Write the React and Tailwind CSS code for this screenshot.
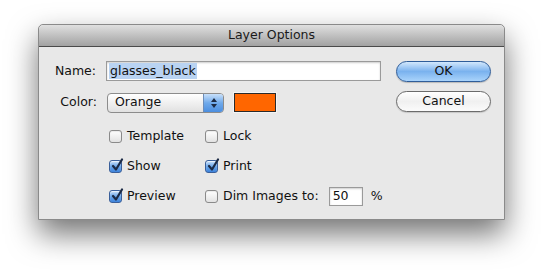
import React from "react";

const font = { fontFamily: '"DejaVu Sans", "Lucida Grande", sans-serif' };

function Checkbox({ checked, label }) {
  return (
    <div className="flex items-center gap-[5px] h-[14px]">
      {checked ? (
        <div className="relative w-[13px] h-[13px] rounded-[3px] border border-[#3a5f9a] bg-gradient-to-b from-[#c9e1fa] via-[#6aa6ea] to-[#3d83db] shadow-[inset_0_1px_1px_rgba(255,255,255,0.7)]">
          <svg className="absolute -top-[3px] left-[1px]" width="13" height="14" viewBox="0 0 13 14">
            <path d="M2 8 L5 11.5 L11 1.5" fill="none" stroke="#1b2a45" strokeWidth="2.2" strokeLinecap="round" strokeLinejoin="round" />
          </svg>
        </div>
      ) : (
        <div className="w-[13px] h-[13px] rounded-[3px] border border-[#8a8a8a] bg-gradient-to-b from-[#ffffff] to-[#e2e2e2] shadow-[inset_0_1px_1px_rgba(0,0,0,0.08)]" />
      )}
      <span className="text-[12.5px] text-[#111] leading-none">{label}</span>
    </div>
  );
}

export default function App() {
  return (
    <div className="w-[546px] h-[274px] bg-white overflow-hidden" style={font}>
      <div className="ml-[38px] pt-[24px]">
        <div className="w-[467px] rounded-t-[5px] border border-[#8a8a8a] bg-[#e8e8e8] shadow-[0_14px_30px_rgba(0,0,0,0.55)]">
          {/* title bar */}
          <div className="h-[22px] rounded-t-[5px] bg-gradient-to-b from-[#e0e0e0] to-[#a2a2a2] border-b border-[#4a4a4a] flex items-center justify-center">
            <span className="text-[12.5px] text-[#1a1a1a]">Layer Options</span>
          </div>

          {/* body */}
          <div className="flex pt-[14px] pb-[16px] pr-[13px]">
            <div className="flex-1">
              <div className="flex items-center">
                <div className="w-[57px] text-right text-[12.5px] text-[#111]">Name:</div>
                <div className="ml-[10px] w-[275px] h-[20px] bg-white border border-[#9a9a9a] shadow-[inset_0_1px_2px_rgba(0,0,0,0.2)] flex items-center pl-[2px]">
                  <span className="bg-[#b9d3f2] text-[12.5px] text-[#111] leading-[16px] px-[1px]">glasses_black</span>
                </div>
              </div>

              <div className="flex items-center mt-[11px]">
                <div className="w-[58px] text-right text-[12.5px] text-[#111]">Color:</div>
                <div className="ml-[10px] w-[117px] h-[20px] rounded-[4px] border border-[#8c8c8c] bg-gradient-to-b from-[#ffffff] to-[#e1e1e1] flex items-center overflow-hidden">
                  <span className="flex-1 pl-[7px] text-[12.5px] text-[#111]">Orange</span>
                  <div className="w-[20px] h-full border-l border-[#6d8db8] bg-gradient-to-b from-[#c8e0fa] via-[#6fa9ea] to-[#4b8ee0] flex flex-col items-center justify-center gap-[2px]">
                    <svg width="6" height="4" viewBox="0 0 6 4"><path d="M3 0 L6 4 L0 4 Z" fill="#1d2b44" /></svg>
                    <svg width="6" height="4" viewBox="0 0 6 4"><path d="M0 0 L6 0 L3 4 Z" fill="#1d2b44" /></svg>
                  </div>
                </div>
                <div className="ml-[9px] p-[1px] bg-[#f4f4f4]">
                  <div className="w-[42px] h-[19px] bg-[#ff6600] border border-[#2a2a2a]" />
                </div>
              </div>

              <div className="ml-[70px] mt-[16px] grid grid-cols-[96px_auto] gap-y-[16px]">
                <Checkbox label="Template" />
                <Checkbox label="Lock" />
                <Checkbox checked label="Show" />
                <Checkbox checked label="Print" />
                <Checkbox checked label="Preview" />
                <div className="flex items-center h-[14px]">
                  <Checkbox label="Dim Images to:" />
                  <div className="ml-[10px] shrink-0 w-[34px] h-[19px] bg-white border border-[#9a9a9a] shadow-[inset_0_1px_2px_rgba(0,0,0,0.2)] flex items-center pl-[3px] text-[12.5px] text-[#111]">
                    50
                  </div>
                  <span className="ml-[8px] text-[12.5px] text-[#111]">%</span>
                </div>
              </div>
            </div>

            <div className="flex flex-col gap-[9px]">
              <button className="w-[95px] h-[21px] rounded-full border border-[#2f5d99] bg-gradient-to-b from-[#d2e7fc] via-[#7ab2ee] to-[#a9d3fb] text-[12.5px] text-[#111] shadow-[0_1px_1px_rgba(0,0,0,0.2)]">
                OK
              </button>
              <button className="w-[95px] h-[21px] rounded-full border border-[#6b6b6b] bg-gradient-to-b from-[#ffffff] via-[#f0f0f0] to-[#fbfbfb] text-[12.5px] text-[#111] shadow-[0_1px_1px_rgba(0,0,0,0.15)]">
                Cancel
              </button>
            </div>
          </div>
        </div>
      </div>
    </div>
  );
}
